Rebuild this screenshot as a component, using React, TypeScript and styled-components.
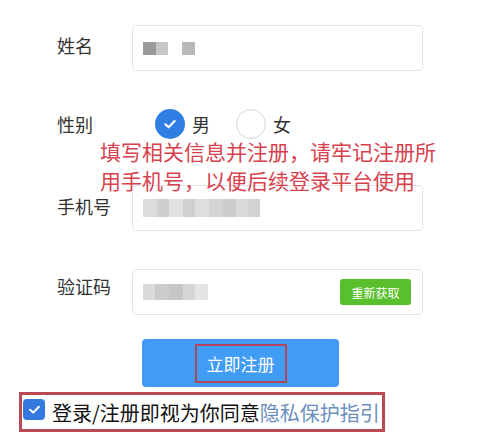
import React from 'react';
import styled, { createGlobalStyle } from 'styled-components';

const GlobalStyle = createGlobalStyle`
  body {
    margin: 0;
    background: #ffffff;
    font-family: "Noto Sans CJK SC", "Noto Sans", sans-serif;
  }
`;

const Page = styled.div`
  width: 485px;
  height: 447px;
  overflow: hidden;
  padding-top: 25px;
  box-sizing: border-box;
`;

const Row = styled.div<{ $height: number; $gap: number }>`
  display: grid;
  grid-template-columns: 75px 291px;
  align-items: center;
  padding-left: 57px;
  height: ${(p) => p.$height}px;
  margin-bottom: ${(p) => p.$gap}px;
`;

const Label = styled.div<{ $shift?: number }>`
  font-size: 18px;
  color: #333;
  line-height: 1;
  transform: translateY(${(p) => p.$shift ?? 0}px);
`;

const InputBox = styled.div`
  height: 46px;
  box-sizing: border-box;
  border: 1px solid #e4e4e4;
  border-radius: 5px;
  display: flex;
  align-items: center;
  justify-content: space-between;
  padding: 0 11px 0 10px;
`;

const Mosaic = styled.div`
  display: flex;
  filter: blur(0.7px);
`;

const Cell = styled.div<{ $w: number; $h: number; $c: string }>`
  width: ${(p) => p.$w}px;
  height: ${(p) => p.$h}px;
  background: ${(p) => p.$c};
`;

const RadioGroup = styled.div`
  display: flex;
  align-items: center;
  padding-left: 23px;
`;

const Radio = styled.span<{ $checked?: boolean }>`
  width: 30px;
  height: 30px;
  border-radius: 50%;
  box-sizing: border-box;
  display: flex;
  align-items: center;
  justify-content: center;
  background: ${(p) => (p.$checked ? '#2f7ee3' : '#fff')};
  border: ${(p) => (p.$checked ? 'none' : '1px solid #d6d6d6')};
`;

const RadioText = styled.span`
  font-size: 18px;
  color: #333;
  margin: 0 26px 0 7px;
`;

const Note = styled.div`
  margin: -2px 0 -10px 100px;
  width: 345px;
  font-size: 21px;
  line-height: 29px;
  color: #d8414e;
  position: relative;
  z-index: 1;
`;

const GetCode = styled.div`
  width: 71px;
  height: 26px;
  border-radius: 3px;
  background: #5abf2c;
  color: #fff;
  font-size: 12px;
  display: flex;
  align-items: center;
  justify-content: center;
`;

const Submit = styled.div`
  margin: 0 0 5px 142px;
  width: 197px;
  height: 48px;
  border-radius: 4px;
  background: #419cf6;
  display: flex;
  align-items: center;
  justify-content: center;
`;

const Highlight = styled.span`
  border: 2px solid #b24659;
  width: 92px;
  height: 39px;
  box-sizing: border-box;
  display: flex;
  align-items: center;
  justify-content: center;
  color: #fff;
  font-size: 17px;
`;

const Agree = styled.div`
  margin-left: 19px;
  width: 366px;
  height: 40px;
  box-sizing: border-box;
  border: 3px solid #b94a55;
  display: flex;
  align-items: center;
  padding-left: 1px;
  font-size: 20px;
  color: #111;
  white-space: nowrap;
`;

const Check = styled.span`
  width: 22px;
  height: 21px;
  border-radius: 4px;
  background: #3479e0;
  display: flex;
  align-items: center;
  justify-content: center;
  margin: -6px 7px 0 0;
`;

const Link = styled.span`
  color: #6b8fbf;
`;

const Tick = ({ size }: { size: number }) => (
  <svg width={size} height={size} viewBox="0 0 12 12">
    <path d="M2.5 6.2 L5 8.5 L9.5 3.8" fill="none" stroke="#fff" strokeWidth="1.6" strokeLinecap="round" strokeLinejoin="round" />
  </svg>
);

type Block = [number, number, string];

const Blur = ({ cells }: { cells: Block[] }) => (
  <Mosaic>
    {cells.map(([w, h, c], i) => (
      <Cell key={i} $w={w} $h={h} $c={c} />
    ))}
  </Mosaic>
);

const nameCells: Block[] = [[13, 13, '#9a9a9a'], [12, 13, '#c6c6c6'], [14, 13, '#fff'], [13, 13, '#b9b9b9']];
const phoneCells: Block[] = [
  [14, 18, '#dcdcdc'], [12, 18, '#cfcfcf'], [14, 18, '#e2e2e2'], [12, 18, '#d0d0d0'],
  [14, 18, '#dedede'], [13, 18, '#d4d4d4'], [14, 18, '#cdcdcd'], [12, 18, '#dadada'], [12, 18, '#d2d2d2'],
];
const codeCells: Block[] = [[12, 16, '#dadada'], [14, 16, '#cbcbcb'], [14, 16, '#c6c6c6'], [12, 16, '#d6d6d6'], [13, 16, '#e4e4e4']];

export default function App() {
  return (
    <Page>
      <GlobalStyle />
      <Row $height={46} $gap={38}>
        <Label $shift={-3}>姓名</Label>
        <InputBox>
          <Blur cells={nameCells} />
        </InputBox>
      </Row>
      <Row $height={30} $gap={0}>
        <Label $shift={0}>性别</Label>
        <RadioGroup>
          <Radio $checked>
            <Tick size={16} />
          </Radio>
          <RadioText>男</RadioText>
          <Radio />
          <RadioText>女</RadioText>
        </RadioGroup>
      </Row>
      <Note>填写相关信息并注册，请牢记注册所用手机号，以便后续登录平台使用</Note>
      <Row $height={46} $gap={38}>
        <Label $shift={-2}>手机号</Label>
        <InputBox>
          <Blur cells={phoneCells} />
        </InputBox>
      </Row>
      <Row $height={46} $gap={24}>
        <Label $shift={-6}>验证码</Label>
        <InputBox>
          <Blur cells={codeCells} />
          <GetCode>重新获取</GetCode>
        </InputBox>
      </Row>
      <Submit>
        <Highlight>立即注册</Highlight>
      </Submit>
      <Agree>
        <Check>
          <Tick size={15} />
        </Check>
        登录/注册即视为你同意<Link>隐私保护指引</Link>
      </Agree>
    </Page>
  );
}
